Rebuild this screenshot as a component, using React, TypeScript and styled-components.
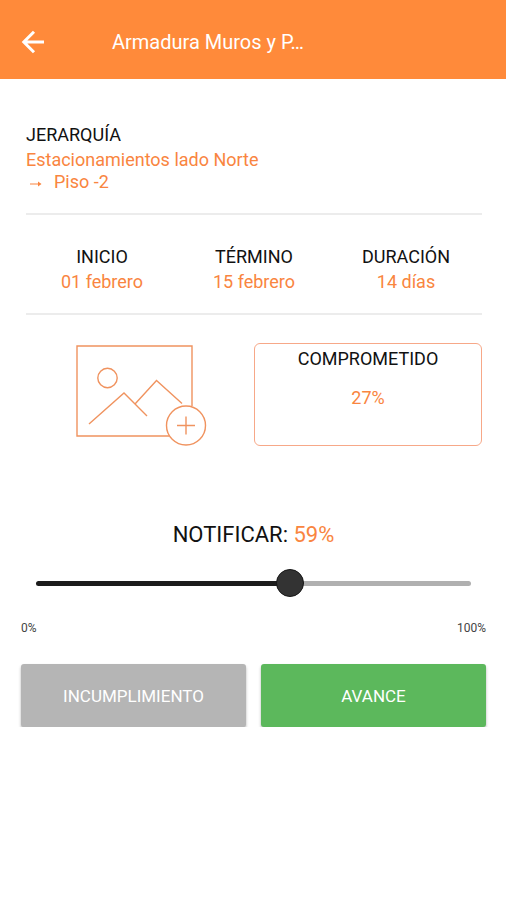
import React, { useState } from 'react';
import styled, { createGlobalStyle } from 'styled-components';

const ORANGE = '#ff8a3a';
const TEXT_ORANGE = '#f98540';

const GlobalStyle = createGlobalStyle`
  *, *::before, *::after { box-sizing: border-box; }
  body {
    margin: 0;
    background: #fff;
    color: #111;
    font-family: Roboto, "Liberation Sans", sans-serif;
    font-size: 18px;
    line-height: 22px;
  }
`;

const Header = styled.header`
  display: flex;
  align-items: center;
  gap: 64px;
  height: 79px;
  padding: 4px 18px 0;
  background: ${ORANGE};
  color: #fff;
`;

const BackButton = styled.button`
  display: flex;
  flex: none;
  padding: 0;
  border: 0;
  background: none;
  color: inherit;
  cursor: pointer;
`;

const Title = styled.h1`
  margin: 0;
  font-size: 20px;
  font-weight: 400;
  line-height: 24px;
  white-space: nowrap;
`;

const Details = styled.div`
  padding: 0 24px 0 26px;
`;

const Section = styled.section`
  padding: 45px 0 20px;
  border-bottom: 2px solid #ececec;
`;

const Label = styled.h2`
  margin: 0 0 3px;
  font-size: 18px;
  font-weight: 400;
  line-height: 22px;
`;

const Value = styled.p`
  margin: 0;
  color: ${TEXT_ORANGE};
`;

const ChildLevel = styled(Value)`
  display: flex;
  align-items: center;
  gap: 12px;
`;

const Dates = styled.section`
  display: grid;
  grid-template-columns: repeat(3, 1fr);
  padding: 31px 0 20px;
  border-bottom: 2px solid #ececec;
  text-align: center;
`;

const Cards = styled.section`
  display: grid;
  grid-template-columns: 1fr 1fr;
  padding-top: 28px;
`;

const PhotoButton = styled.button`
  display: flex;
  justify-content: center;
  padding: 0;
  border: 0;
  background: none;
  color: #f0935f;
  cursor: pointer;
`;

const Committed = styled.div`
  height: 103px;
  padding-top: 4px;
  border: 1px solid #f7a888;
  border-radius: 6px;
  text-align: center;

  ${Label} { margin-bottom: 17px; }
`;

const Notify = styled.section`
  padding: 74px 20px 0 21px;
`;

const NotifyLabel = styled.label`
  display: block;
  font-size: 22px;
  line-height: 28px;
  text-align: center;

  output { color: ${TEXT_ORANGE}; }
`;

const Slider = styled.input<{ $value: number }>`
  appearance: none;
  display: block;
  width: calc(100% - 30px);
  height: 28px;
  margin: 20px 15px 0;
  background: none;
  cursor: pointer;

  &::-webkit-slider-runnable-track {
    height: 5px;
    border-radius: 3px;
    background: linear-gradient(
      to right,
      #1c1c1c ${(p) => p.$value}%,
      #b0b0b0 ${(p) => p.$value}%
    );
  }

  &::-webkit-slider-thumb {
    appearance: none;
    width: 28px;
    height: 28px;
    margin-top: -12px;
    border: 1px solid #161616;
    border-radius: 50%;
    background: #333;
  }
`;

const Scale = styled.div`
  display: flex;
  justify-content: space-between;
  margin-top: 22px;
  color: #444;
  font-size: 12px;
  line-height: 18px;
`;

const Actions = styled.div`
  display: grid;
  grid-template-columns: 1fr 1fr;
  gap: 15px;
  margin-top: 27px;
`;

const ActionButton = styled.button<{ $color: string }>`
  height: 63px;
  padding: 0;
  border: 0;
  border-radius: 3px;
  background: ${(p) => p.$color};
  box-shadow: 0 2px 3px rgba(0, 0, 0, 0.3);
  color: #fff;
  font: inherit;
  font-size: 17px;
  cursor: pointer;
`;

const BackIcon = () => (
  <svg width="30" height="30" viewBox="0 0 30 30" fill="none" stroke="currentColor" strokeWidth="3" aria-hidden="true">
    <path d="M26 15H6M16 4.800 5.800 15 16 25.200" />
  </svg>
);

const LevelArrow = () => (
  <svg width="16" height="10" viewBox="0 0 16 10" aria-hidden="true">
    <path d="M4 7h9" stroke="currentColor" fill="none" />
    <path d="M12 4.500 15.500 7 12 9.500z" fill="currentColor" />
  </svg>
);

const AddPhotoIcon = () => (
  <svg width="134" height="104" viewBox="0 0 134 104" fill="none" stroke="currentColor" strokeWidth="1.400" aria-hidden="true">
    <path d="M119 63V3H4v90h92" />
    <circle cx="34.500" cy="35" r="9.700" />
    <path d="m16 81 35-31 23 23M62 61l21.500-23.500L109 60.500" />
    <circle cx="113" cy="82.500" r="19.500" />
    <path d="M104 82.500h18M113 73.500v18" />
  </svg>
);

const dates = [
  { label: 'INICIO', value: '01 febrero' },
  { label: 'TÉRMINO', value: '15 febrero' },
  { label: 'DURACIÓN', value: '14 días' },
];

export default function App() {
  const [progress, setProgress] = useState(59);

  return (
    <>
      <GlobalStyle />
      <Header>
        <BackButton type="button" aria-label="Volver">
          <BackIcon />
        </BackButton>
        <Title>Armadura Muros y P…</Title>
      </Header>
      <main>
        <Details>
          <Section>
            <Label>JERARQUÍA</Label>
            <Value>Estacionamientos lado Norte</Value>
            <ChildLevel>
              <LevelArrow />
              Piso -2
            </ChildLevel>
          </Section>
          <Dates>
            {dates.map((d) => (
              <div key={d.label}>
                <Label>{d.label}</Label>
                <Value>{d.value}</Value>
              </div>
            ))}
          </Dates>
          <Cards>
            <PhotoButton type="button" aria-label="Agregar foto">
              <AddPhotoIcon />
            </PhotoButton>
            <Committed>
              <Label>COMPROMETIDO</Label>
              <Value>27%</Value>
            </Committed>
          </Cards>
        </Details>
        <Notify>
          <NotifyLabel htmlFor="progress">
            NOTIFICAR: <output htmlFor="progress">{progress}%</output>
          </NotifyLabel>
          <Slider
            id="progress"
            type="range"
            min={0}
            max={100}
            value={progress}
            $value={progress}
            onChange={(e) => setProgress(Number(e.target.value))}
          />
          <Scale>
            <span>0%</span>
            <span>100%</span>
          </Scale>
          <Actions>
            <ActionButton type="button" $color="#b5b5b5">INCUMPLIMIENTO</ActionButton>
            <ActionButton type="button" $color="#5cb85c">AVANCE</ActionButton>
          </Actions>
        </Notify>
      </main>
    </>
  );
}
